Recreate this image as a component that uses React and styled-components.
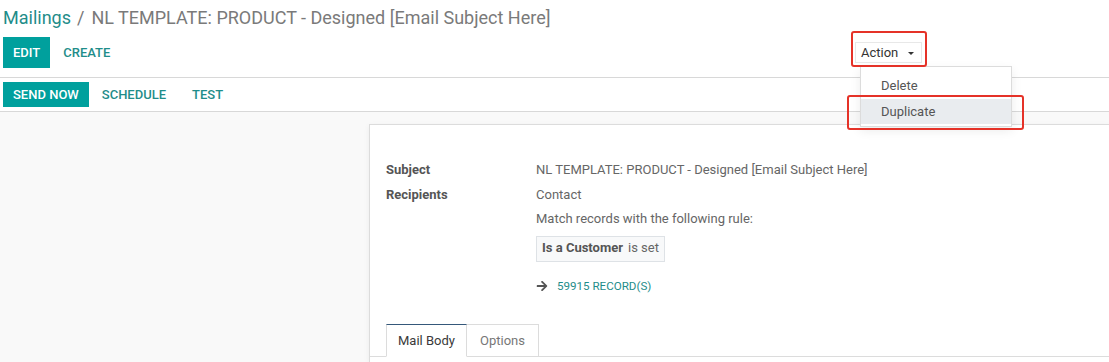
import React from 'react';
import styled, { createGlobalStyle } from 'styled-components';
import { FaArrowRight } from 'react-icons/fa';

const GlobalStyle = createGlobalStyle`
  html, body {
    margin: 0;
    padding: 0;
    height: 100%;
    overflow: hidden;
  }
  body {
    font-family: Roboto, "Noto Sans", sans-serif;
    font-size: 13px;
    color: #666666;
    background: #f9f9f9;
  }
  #root {
    height: 100%;
    display: flex;
    flex-direction: column;
  }
`;

const ControlPanel = styled.div`
  background: #ffffff;
  border-bottom: 1px solid #d8d8d8;
  padding: 6px 0 9px 3px;
`;

const Breadcrumb = styled.div`
  font-size: 18px;
  line-height: 24px;
  color: #7a7a7a;
  white-space: nowrap;

  a {
    color: #1f8d8a;
    text-decoration: none;
  }
`;

const Slash = styled.span`
  margin: 0 7px 0 6px;
  color: #777777;
`;

const ButtonRow = styled.div`
  display: grid;
  grid-template-columns: 852px auto;
  align-items: center;
  margin-top: 7px;
  height: 31px;
`;

const ButtonGroup = styled.div`
  display: flex;
  align-items: center;
`;

const Button = styled.button`
  font-family: inherit;
  font-size: 13px;
  font-weight: 500;
  text-transform: uppercase;
  border: none;
  border-radius: 0;
  cursor: pointer;
  padding: 0 ${(p) => (p.$primary ? '10px' : '13px')};
  height: ${(p) => p.$height || 31}px;
  background: ${(p) => (p.$primary ? '#00a09d' : 'transparent')};
  color: ${(p) => (p.$primary ? '#ffffff' : '#1f8d8a')};
`;

const ActionWrap = styled.div`
  position: relative;
  justify-self: start;
`;

const ActionButton = styled.button`
  font-family: inherit;
  font-size: 13px;
  color: #333333;
  background: #ffffff;
  border: 1px solid #e8e8e8;
  height: 21px;
  width: 67px;
  padding: 0 5px;
  display: flex;
  align-items: center;
  gap: 10px;
`;

const Caret = styled.span`
  width: 0;
  height: 0;
  border-left: 3px solid transparent;
  border-right: 3px solid transparent;
  border-top: 3px solid #333333;
  margin-top: 1px;
`;

const Menu = styled.ul`
  position: absolute;
  top: 24px;
  left: 5px;
  width: 150px;
  margin: 0;
  padding: 6px 0 2px;
  list-style: none;
  background: #ffffff;
  border: 1px solid #dcdcdc;
  box-shadow: 0 4px 10px rgba(0, 0, 0, 0.08);
  z-index: 3;
`;

const MenuItem = styled.li`
  height: 25px;
  line-height: 25px;
  padding: 0 20px;
  margin-top: ${(p) => (p.$active ? '1px' : '0')};
  color: #555555;
  background: ${(p) => (p.$active ? '#e9ecef' : 'transparent')};
`;

const Highlight = styled.div`
  position: absolute;
  border: 2px solid #e53228;
  border-radius: 3px;
  pointer-events: none;
  z-index: 4;
`;

const StatusBar = styled.div`
  background: #ffffff;
  border-bottom: 1px solid #d8d8d8;
  height: 33px;
  display: flex;
  align-items: center;
  padding-left: 3px;
  flex-shrink: 0;
`;

const Content = styled.div`
  flex: 1;
  min-height: 0;
  display: flex;
  padding: 12px 0 0 369px;
`;

const Sheet = styled.div`
  flex: 1;
  background: #ffffff;
  border: 1px solid #dcdcdc;
  border-right: none;
  border-bottom: none;
  box-shadow: 0 2px 6px rgba(0, 0, 0, 0.06);
  padding: 33px 0 0 16px;
`;

const FieldGrid = styled.div`
  display: grid;
  grid-template-columns: 150px 1fr;
  line-height: 24.5px;
`;

const Label = styled.div`
  font-weight: 700;
  color: #555555;
`;

const Value = styled.div`
  color: #666666;
`;

const Tag = styled.div`
  display: inline-flex;
  align-items: center;
  gap: 5px;
  border: 1px solid #dee2e6;
  background: #f8f9fa;
  height: 24px;
  padding: 0 5px;
  margin-top: 4px;
  color: #666666;

  b {
    color: #555555;
  }
`;

const Records = styled.div`
  display: flex;
  align-items: center;
  gap: 9px;
  margin-top: 12px;
  font-size: 11.6px;
  color: #1f8d8a;

  svg {
    color: #555555;
    font-size: 12px;
  }
`;

const Tabs = styled.div`
  display: flex;
  margin: 26px 0 0 -16px;
  padding-left: 16px;
  border-bottom: 1px solid #dcdcdc;
`;

const Tab = styled.div`
  height: 31px;
  display: flex;
  align-items: center;
  padding: 0 ${(p) => (p.$active ? '11px' : '13px')};
  border: 1px solid #dcdcdc;
  border-top-color: ${(p) => (p.$active ? '#35587a' : '#dcdcdc')};
  border-left-width: ${(p) => (p.$active ? '1px' : '0')};
  border-bottom-color: ${(p) => (p.$active ? '#ffffff' : '#dcdcdc')};
  margin-bottom: -1px;
  background: #ffffff;
  color: ${(p) => (p.$active ? '#3a3a3a' : '#777777')};
`;

export default function App() {
  return (
    <>
      <GlobalStyle />
      <ControlPanel>
        <Breadcrumb>
          <a href="#">Mailings</a>
          <Slash>/</Slash>
          NL TEMPLATE: PRODUCT - Designed [Email Subject Here]
        </Breadcrumb>
        <ButtonRow>
          <ButtonGroup>
            <Button $primary>Edit</Button>
            <Button>Create</Button>
          </ButtonGroup>
          <ActionWrap>
            <ActionButton>
              Action <Caret />
            </ActionButton>
            <Menu>
              <MenuItem>Delete</MenuItem>
              <MenuItem $active>Duplicate</MenuItem>
            </Menu>
          </ActionWrap>
        </ButtonRow>
      </ControlPanel>
      <Highlight style={{ left: 851, top: 31, width: 72, height: 32 }} />
      <Highlight style={{ left: 847, top: 95, width: 173, height: 31 }} />
      <StatusBar>
        <Button $primary $height={25}>Send Now</Button>
        <Button $height={25}>Schedule</Button>
        <Button $height={25}>Test</Button>
      </StatusBar>
      <Content>
        <Sheet>
          <FieldGrid>
            <Label>Subject</Label>
            <Value>NL TEMPLATE: PRODUCT - Designed [Email Subject Here]</Value>
            <Label>Recipients</Label>
            <Value>Contact</Value>
            <div />
            <Value>Match records with the following rule:</Value>
            <div />
            <Value>
              <Tag>
                <b>Is a Customer</b> is set
              </Tag>
              <Records>
                <FaArrowRight />
                59915 RECORD(S)
              </Records>
            </Value>
          </FieldGrid>
          <Tabs>
            <Tab $active>Mail Body</Tab>
            <Tab>Options</Tab>
          </Tabs>
        </Sheet>
      </Content>
    </>
  );
}
